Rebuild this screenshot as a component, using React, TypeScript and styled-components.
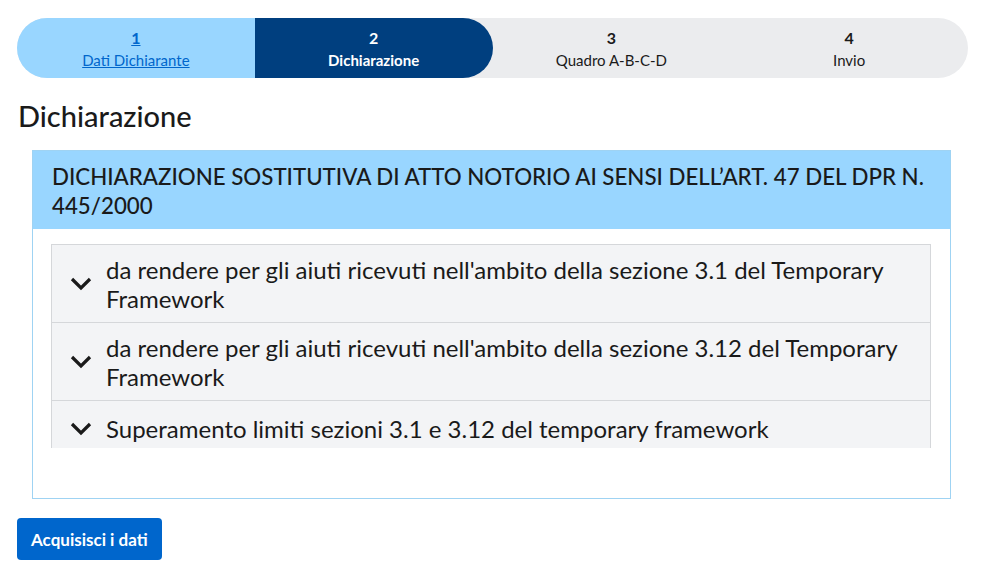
import React from 'react';
import styled, { createGlobalStyle } from 'styled-components';

const GlobalStyle = createGlobalStyle`
  body {
    margin: 0;
    font-family: Lato, "Noto Sans", sans-serif;
    color: #1a1a1a;
    background: #fff;
  }
`;

const Page = styled.div`
  padding: 18px 20px 10px 17px;
`;

const Stepper = styled.div`
  display: grid;
  grid-template-columns: repeat(4, 1fr);
  width: 951px;
  height: 60px;
  background: #ebecee;
  border-radius: 30px;
  overflow: hidden;
`;

type StepKind = 'done' | 'active' | 'todo';

const Step = styled.div<{ $kind: StepKind }>`
  display: flex;
  flex-direction: column;
  align-items: center;
  justify-content: center;
  gap: 6px;
  padding-top: 2px;
  font-size: 15px;
  background: ${(p) =>
    p.$kind === 'done' ? '#99d6ff' : p.$kind === 'active' ? '#003f7f' : 'transparent'};
  color: ${(p) => (p.$kind === 'active' ? '#fff' : p.$kind === 'done' ? '#0066cc' : '#1a1a1a')};
  border-radius: ${(p) => (p.$kind === 'active' ? '0 30px 30px 0' : '0')};
`;

const StepNum = styled.span<{ $link: boolean }>`
  font-weight: 700;
  font-size: 16px;
  line-height: 16px;
  text-decoration: ${(p) => (p.$link ? 'underline' : 'none')};
`;

const StepLabel = styled.span<{ $link: boolean; $bold: boolean }>`
  line-height: 16px;
  font-weight: ${(p) => (p.$bold ? 700 : 400)};
  text-decoration: ${(p) => (p.$link ? 'underline' : 'none')};
`;

const Title = styled.h2`
  margin: 21px 0 0 1px;
  font-size: 29px;
  font-weight: 500;
  line-height: 34px;
`;

const Card = styled.section`
  margin: 17px 0 0 15px;
  width: 917px;
  border: 1px solid #9fd3f3;
`;

const CardHeader = styled.div`
  background: #99d6ff;
  padding: 11px 19px 9px 19px;
  font-size: 22.3px;
  line-height: 29px;
  font-weight: 500;
`;

const CardBody = styled.div`
  padding: 15px 19px 50px 18px;
`;

const List = styled.div`
  height: 204px;
  overflow: hidden;
`;

const Item = styled.div`
  display: flex;
  align-items: center;
  gap: 14px;
  padding: 10px 20px 9px 18px;
  min-height: 55px;
  box-sizing: border-box;
  background: #f3f4f6;
  border: 1px solid #d5d7da;
  border-top: none;
  font-size: 24px;
  line-height: 29px;
  &:first-child {
    border-top: 1px solid #d5d7da;
  }
`;

const Chevron = styled.svg`
  flex: 0 0 22px;
  width: 22px;
  height: 14px;
`;

const Button = styled.button`
  margin-top: 19px;
  height: 42px;
  padding: 0 14px;
  background: #0066cc;
  color: #fff;
  border: none;
  border-radius: 4px;
  font-family: inherit;
  font-size: 17px;
  font-weight: 700;
`;

const steps: { n: string; label: string; kind: StepKind }[] = [
  { n: '1', label: 'Dati Dichiarante', kind: 'done' },
  { n: '2', label: 'Dichiarazione', kind: 'active' },
  { n: '3', label: 'Quadro A-B-C-D', kind: 'todo' },
  { n: '4', label: 'Invio', kind: 'todo' },
];

const items = [
  "da rendere per gli aiuti ricevuti nell'ambito della sezione 3.1 del Temporary Framework",
  "da rendere per gli aiuti ricevuti nell'ambito della sezione 3.12 del Temporary Framework",
  'Superamento limiti sezioni 3.1 e 3.12 del temporary framework',
];

const ChevronIcon = () => (
  <Chevron viewBox="0 0 22 14">
    <path d="M2 2 L11 11 L20 2" fill="none" stroke="#1a1a1a" strokeWidth="3.2" />
  </Chevron>
);

export default function App() {
  return (
    <Page>
      <GlobalStyle />
      <Stepper>
        {steps.map((s) => (
          <Step key={s.n} $kind={s.kind}>
            <StepNum $link={s.kind === 'done'}>{s.n}</StepNum>
            <StepLabel $link={s.kind === 'done'} $bold={s.kind === 'active'}>
              {s.label}
            </StepLabel>
          </Step>
        ))}
      </Stepper>
      <Title>Dichiarazione</Title>
      <Card>
        <CardHeader>
          DICHIARAZIONE SOSTITUTIVA DI ATTO NOTORIO AI SENSI DELL’ART. 47 DEL DPR N. 445/2000
        </CardHeader>
        <CardBody>
          <List>
            {items.map((t) => (
              <Item key={t}>
                <ChevronIcon />
                <span>{t}</span>
              </Item>
            ))}
          </List>
        </CardBody>
      </Card>
      <Button>Acquisisci i dati</Button>
    </Page>
  );
}
